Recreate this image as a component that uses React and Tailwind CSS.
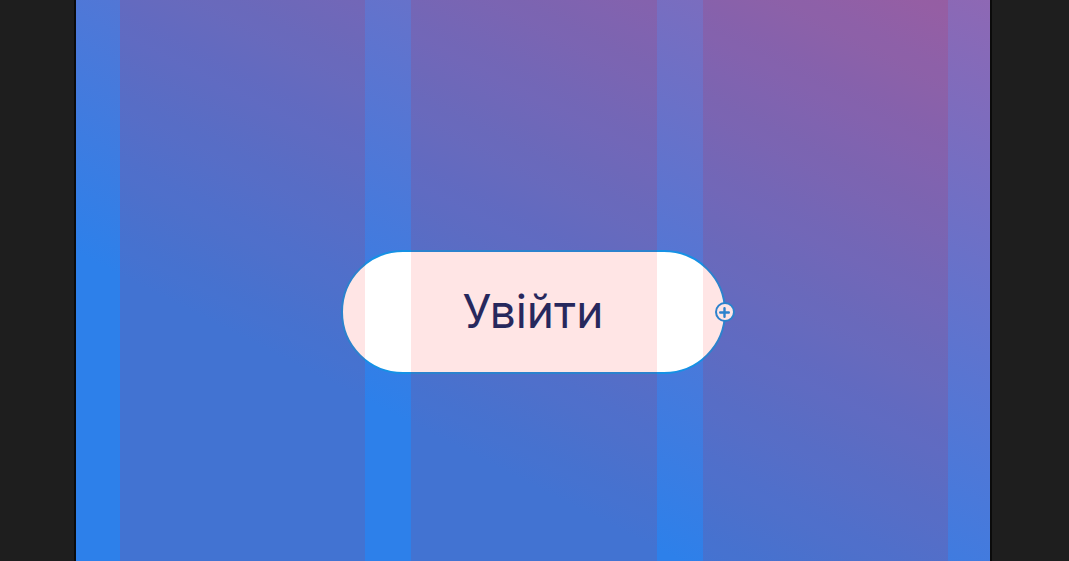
export default function App() {
  return (
    <div className="w-[1069px] h-[561px] bg-[#1e1e1e] overflow-hidden flex">
      <div className="ml-[74px] h-full border-x-2 border-[#0b0b0b]">
        <div
          className="relative w-[914px] h-full flex justify-center pt-[250px]"
          style={{ background: "linear-gradient(27deg, #2d80ea 30%, #8e68b4 100%)" }}
        >
          <div className="relative w-[385px] h-[124px] rounded-full bg-white border-2 border-[#1591e5] flex items-center justify-center">
            <span
              className="text-[46px] leading-none text-[#0e2d68] -mt-[2px]"
              style={{ fontFamily: "Inter, 'Noto Sans', sans-serif" }}
            >
              Увійти
            </span>
            <div className="absolute -right-[11px] top-1/2 -translate-y-1/2 w-[20px] h-[20px] rounded-full bg-white border-2 border-[#1591e5] flex items-center justify-center">
              <svg width="11" height="11" viewBox="0 0 11 11">
                <path d="M5.5 1.2v8.6M1.2 5.5h8.6" stroke="#1591e5" strokeWidth="2.4" strokeLinecap="round" />
              </svg>
            </div>
          </div>
          <div className="pointer-events-none absolute inset-0 flex gap-[46px] pl-[44px] pr-[42px]">
            <div className="flex-1 bg-[rgba(255,0,0,0.1)]" />
            <div className="flex-1 bg-[rgba(255,0,0,0.1)]" />
            <div className="flex-1 bg-[rgba(255,0,0,0.1)]" />
          </div>
        </div>
      </div>
    </div>
  );
}
